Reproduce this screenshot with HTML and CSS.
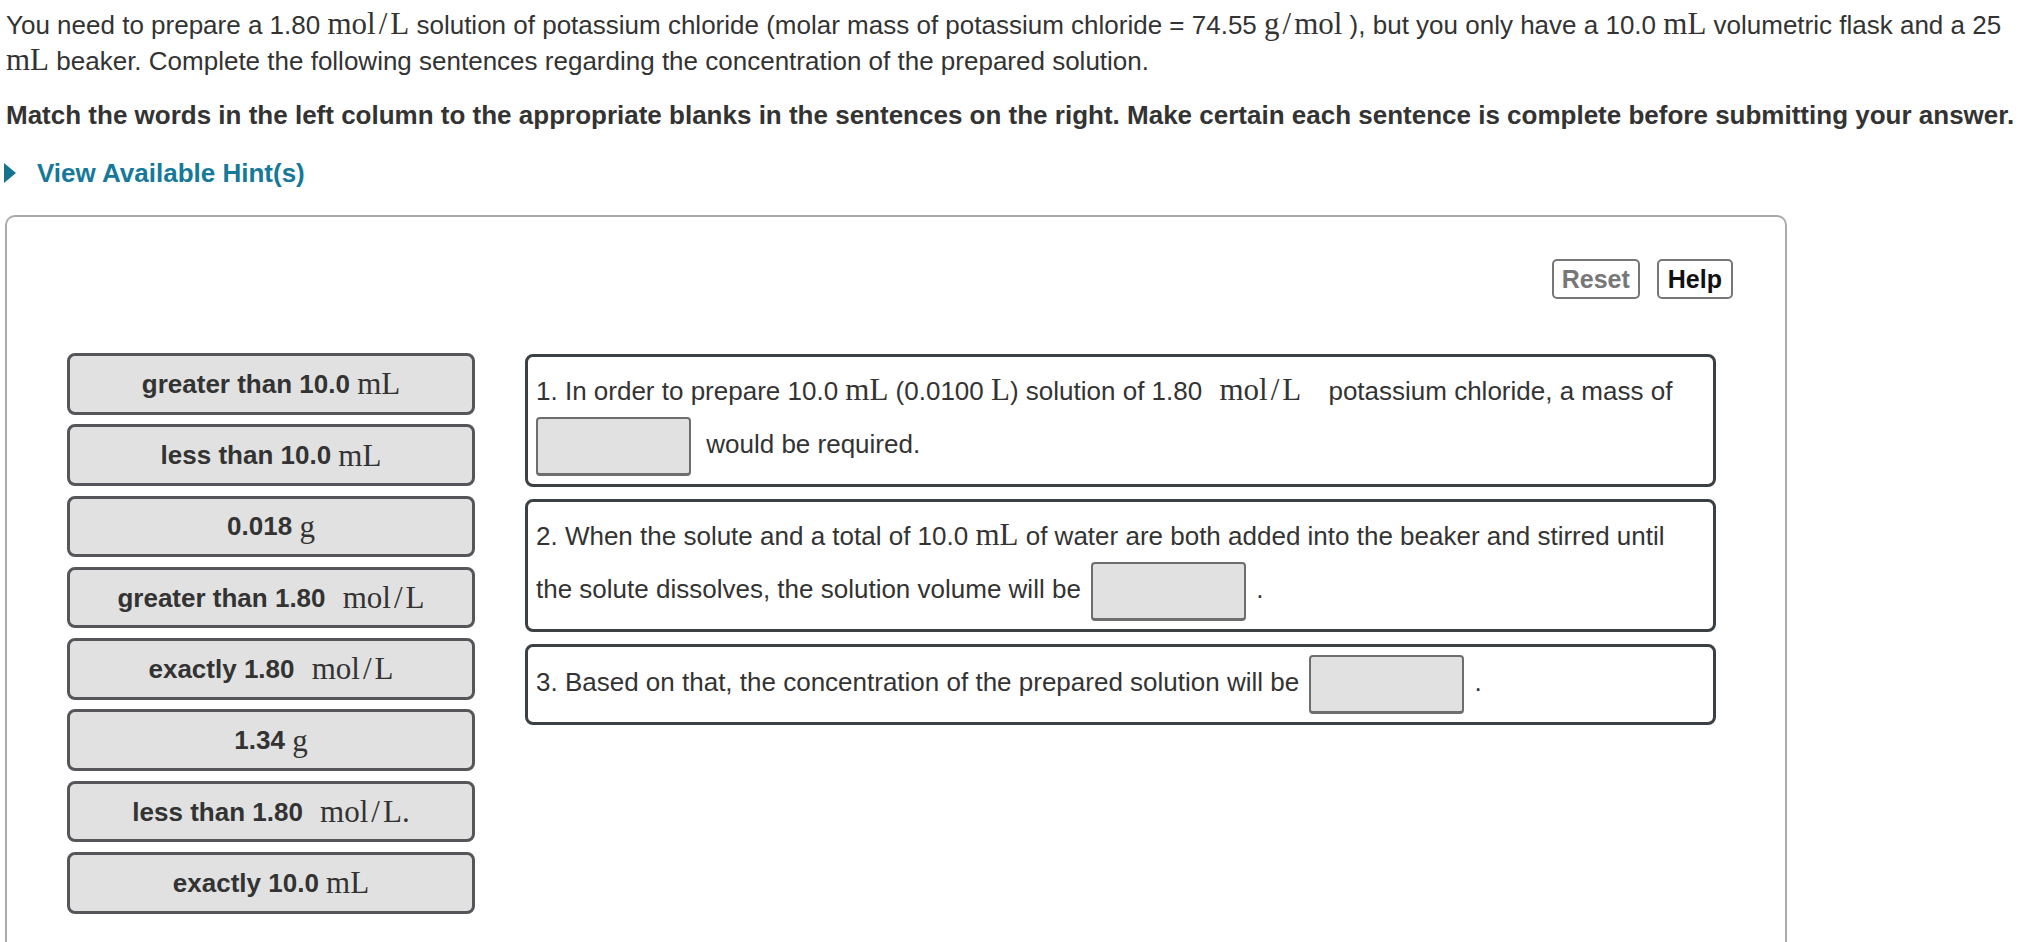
FILE: index.html
```html
<!DOCTYPE html>
<html lang="en">
<head>
<meta charset="utf-8">
<title>Matching</title>
<link rel="stylesheet" href="styles.css">
</head>
<body>
<div class="page">
  <p class="intro">You need to prepare a 1.80 <span class="m">mol<span class="sl">/</span>L</span> solution of potassium chloride (molar mass of potassium chloride = 74.55 <span class="m">g<span class="sl">/</span>mol</span> ), but you only have a 10.0 <span class="m">mL</span> volumetric flask and a 25<br><span class="m">mL</span> beaker. Complete the following sentences regarding the concentration of the prepared solution.</p>
  <p class="instr">Match the words in the left column to the appropriate blanks in the sentences on the right. Make certain each sentence is complete before submitting your answer.</p>
  <div class="hint">
    <svg class="hint-icon" width="12" height="20" viewBox="0 0 12 20"><polygon points="0,0 12,10 0,20" fill="#14738e"/></svg>
    <span>View Available Hint(s)</span>
  </div>

  <div class="panel">
    <div class="toolbar">
      <button class="btn btn-reset">Reset</button>
      <button class="btn btn-help">Help</button>
    </div>
    <div class="board">
      <div class="items">
        <div class="item">greater than 10.0&nbsp;<span class="m">mL</span></div>
        <div class="item">less than 10.0&nbsp;<span class="m">mL</span></div>
        <div class="item">0.018&nbsp;<span class="m">g</span></div>
        <div class="item">greater than 1.80&nbsp;<span class="m gap">mol<span class="sl">/</span>L</span></div>
        <div class="item">exactly 1.80&nbsp;<span class="m gap">mol<span class="sl">/</span>L</span></div>
        <div class="item">1.34&nbsp;<span class="m">g</span></div>
        <div class="item">less than 1.80&nbsp;<span class="m gap">mol<span class="sl">/</span>L.</span></div>
        <div class="item">exactly 10.0&nbsp;<span class="m">mL</span></div>
      </div>
      <div class="sentences">
        <div class="sent">
          <div class="line">1. In order to prepare 10.0 <span class="m">mL</span> (0.0100 <span class="m">L</span>) solution of 1.80 <span class="m gap gap-after">mol<span class="sl">/</span>L</span> potassium chloride, a mass of</div>
          <div class="line"><span class="drop drop-first"></span> would be required.</div>
        </div>
        <div class="sent">
          <div class="line">2. When the solute and a total of 10.0 <span class="m">mL</span> of water are both added into the beaker and stirred until</div>
          <div class="line">the solute dissolves, the solution volume will be <span class="drop"></span> .</div>
        </div>
        <div class="sent">
          <div class="line">3. Based on that, the concentration of the prepared solution will be <span class="drop"></span> .</div>
        </div>
      </div>
    </div>
  </div>
</div>
</body>
</html>
```
FILE: styles.css
```css
html, body {
  margin: 0;
  padding: 0;
  background: #ffffff;
}

body {
  font-family: "Liberation Sans", Arial, sans-serif;
  font-size: 26px;
  color: #333333;
  overflow: hidden;
}

.page {
  padding: 7px 0 0 5px;
}

.m {
  font-family: "Liberation Serif", "Times New Roman", serif;
  font-size: 31px;
  font-weight: normal;
  line-height: 1;
}

.sl {
  margin: 0 3px;
}

.gap {
  margin-left: 10px;
}

.gap-after {
  margin-right: 20px;
}

.intro {
  margin: 0;
  padding-left: 1px;
  line-height: 36px;
  white-space: nowrap;
}

.instr {
  margin: 18px 0 0;
  padding-left: 1px;
  font-weight: bold;
  line-height: 36px;
  white-space: nowrap;
}

.hint {
  margin-top: 22px;
  display: flex;
  align-items: center;
  gap: 21px;
  color: #16799a;
  font-weight: bold;
  line-height: 36px;
}

.hint-icon {
  margin-left: -1px;
  display: block;
}

.panel {
  margin-top: 24px;
  width: 1782px;
  height: 760px;
  box-sizing: border-box;
  border: 2px solid #aaaaaa;
  border-bottom: none;
  border-radius: 10px 10px 0 0;
  padding: 42px 52px 0 60px;
}

.toolbar {
  display: flex;
  justify-content: flex-end;
  gap: 17px;
}

.btn {
  font-family: "Liberation Sans", Arial, sans-serif;
  font-weight: bold;
  font-size: 25px;
  line-height: 36px;
  border: 2px solid #777777;
  border-radius: 5px;
  padding: 0 8px;
  background: #ffffff;
  margin: 0;
}

.btn-reset {
  color: #777777;
}

.btn-help {
  color: #111111;
  padding: 0 9px;
}

.board {
  display: flex;
  align-items: flex-start;
  gap: 50px;
  margin-top: 54px;
}

.items {
  width: 408px;
  flex: none;
  display: flex;
  flex-direction: column;
  gap: 9.8px;
}

.item {
  height: 61.5px;
  box-sizing: border-box;
  border: 3px solid #55565a;
  border-radius: 8px;
  background: #e1e1e1;
  display: flex;
  align-items: center;
  justify-content: center;
  font-weight: bold;
  line-height: 36px;
  color: #333333;
  white-space: nowrap;
}

.sentences {
  width: 1191px;
  flex: none;
  margin-top: 1px;
  display: flex;
  flex-direction: column;
  gap: 12px;
}

.sent {
  border: 3px solid #3b4045;
  border-radius: 8px;
  padding: 8px 8px;
  background: #ffffff;
}

.line {
  line-height: 52px;
  white-space: nowrap;
}

.drop {
  display: inline-block;
  vertical-align: middle;
  width: 155px;
  height: 59px;
  box-sizing: border-box;
  border: 2px solid #6e6e6e;
  border-bottom-width: 3px;
  border-radius: 4px;
  background: #e1e1e1;
  margin: 0 3px;
}

.drop-first {
  margin: 0 8px 0 0;
}
```
